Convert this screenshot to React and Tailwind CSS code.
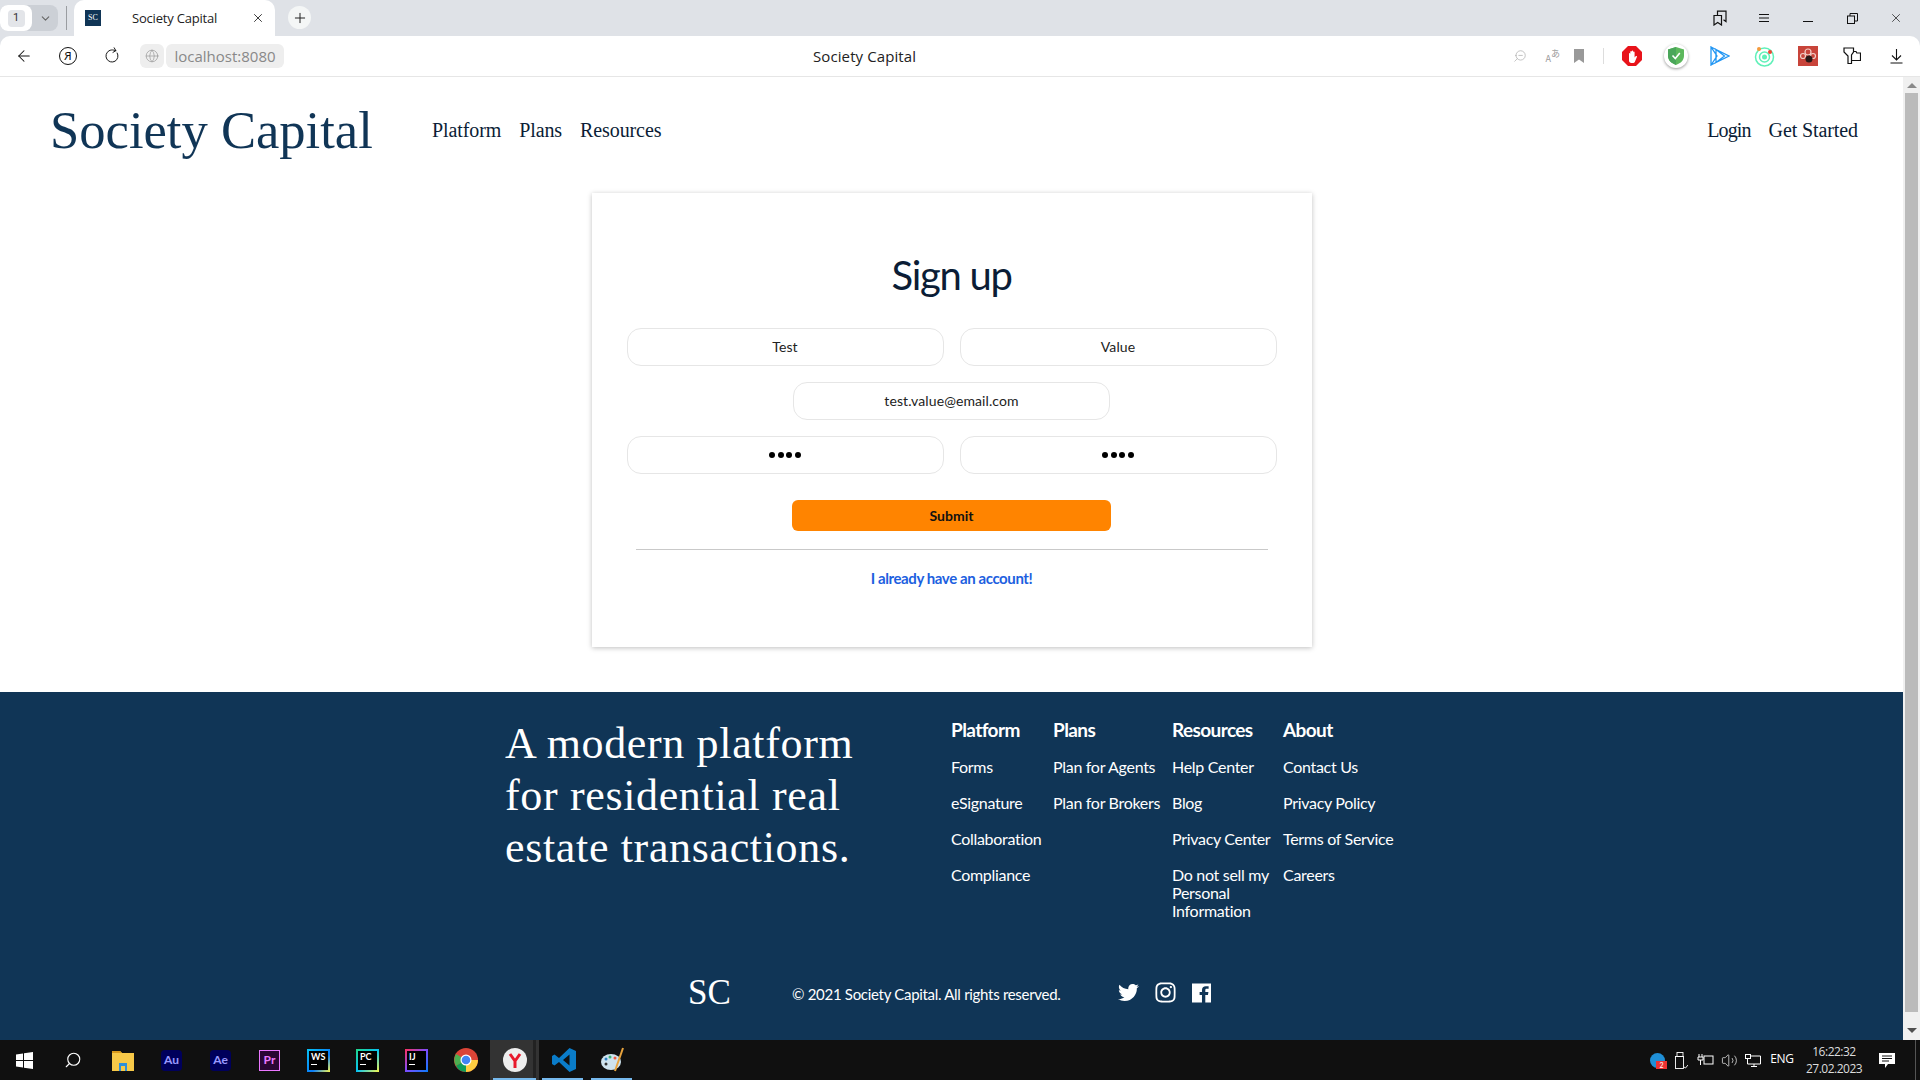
import React from 'react';
import { ArrowLeft, RotateCw, Globe, X, Plus, ChevronDown, ZoomOut, Search, Volume2 } from 'lucide-react';
import { FaTwitter, FaInstagram } from 'react-icons/fa';

const serif = "font-['Liberation_Serif',serif]";
const lato = "font-['Lato',sans-serif]";

function Field({ value, dots }) {
  return (
    <div className={`w-[317px] h-[38px] rounded-[14px] border border-[#e6e6e6] bg-white flex items-center justify-center text-[14px] text-[#222] ${dots ? '' : 'pb-[2px] tracking-[0.1px]'}`}>
      {dots ? (
        <span className="flex gap-[2.5px]">
          {[0, 1, 2, 3].map((i) => <span key={i} className="w-[6px] h-[6px] rounded-full bg-black" />)}
        </span>
      ) : value}
    </div>
  );
}

function FootCol({ title, items, w }) {
  return (
    <div className={`${w} shrink-0`}>
      <div className="text-[19px] font-bold text-white leading-[22px] tracking-[-0.6px] mb-[17px]">{title}</div>
      <div className="flex flex-col gap-[18px]">
        {items.map((t) => <div key={t} className="text-[16px] leading-[18px] text-white tracking-[-0.3px]">{t}</div>)}
      </div>
    </div>
  );
}

function TaskIcon({ children, active, open }) {
  return (
    <div className={`w-[49px] h-[40px] flex items-center justify-center relative ${active ? 'bg-[#333]' : ''}`}>
      {children}
      {active && <span className="absolute top-0 bottom-0 right-[3px] w-[3px] bg-[#222]" />}
      {open && <span className={`absolute bottom-0 left-[3px] h-[2px] bg-[#76b9ed] ${active ? 'right-[3px]' : 'right-[5px]'}`} />}
    </div>
  );
}

function AppTile({ label, bg, color, border, cls = '' }) {
  return (
    <div className={`w-[21px] h-[21px] flex items-center justify-center text-[12px] font-bold ${lato} ${cls}`} style={{ background: bg, color, border: border ? `1px solid ${border}` : undefined }}>{label}</div>
  );
}

function Jet({ label, colors }) {
  return (
    <div className="w-[23px] h-[23px] flex items-start justify-center" style={{ background: colors, padding: 2 }}>
      <div className={`w-full h-full bg-black text-white text-[9px] font-bold leading-[11px] pl-[2px] ${lato}`}>
        {label}
        <div className="w-[6px] h-[1px] bg-white mt-[2px]" />
      </div>
    </div>
  );
}

export default function App() {
  return (
    <div className={`w-[1920px] h-[1080px] overflow-hidden flex flex-col bg-white ${lato}`}>
      {/* tab strip */}
      <div className="h-[36px] bg-[#dfe2e7] flex items-end shrink-0">
        <div className="h-[26px] w-[58px] mb-[5px] rounded-[8px] bg-[#ccd0d6] flex items-center">
          <div className="w-[32px] h-[26px] rounded-[8px] bg-white flex items-center justify-center">
            <span className="w-[17px] h-[17px] rounded-[4px] bg-[#e3e5e9] text-[11px] text-[#333] flex items-center justify-center font-['Roboto',sans-serif]">1</span>
          </div>
          <ChevronDown size={13} className="ml-[7px] text-[#666]" />
        </div>
        <div className="w-px h-[24px] bg-[#9a9da1] ml-[8px] mb-[6px]" />
        <div className="w-[201px] h-[36px] ml-[7px] bg-white rounded-t-[10px] flex items-center pl-[11px] pr-[10px]">
          <div className={`w-[16px] h-[16px] bg-[#103556] text-white text-[8px] leading-[16px] text-center ${serif}`}>SC</div>
          <span className="ml-[31px] mt-[1px] text-[13px] text-[#222] font-['Open_Sans',sans-serif] tracking-[-0.2px]">Society Capital</span>
          <X size={14} strokeWidth={1.5} className="ml-auto text-[#222]" />
        </div>
        <div className="w-[23px] h-[23px] rounded-full bg-[#f4f6f6] ml-[13px] mb-[7px] flex items-center justify-center">
          <Plus size={16} strokeWidth={1.5} className="text-[#222]" />
        </div>
        <div className="ml-auto flex h-[36px] items-center pr-[2px]">
          <div className="w-[44px] flex justify-center">
            <svg width="14" height="16" viewBox="0 0 14 16" fill="none" stroke="#111" strokeWidth="1.2">
              <path d="M1 5.500h7.500v9.500L4.700 12.500 1 15z" /><path d="M4.500 5V1.200H13V11.500l-2.500-1.800" />
            </svg>
          </div>
          <div className="w-[44px] flex justify-center">
            <svg width="12" height="10" viewBox="0 0 12 10" stroke="#111" strokeWidth="1"><path d="M1 1.500h10M1 5h10M1 8.500h10" /></svg>
          </div>
          <div className="w-[44px] flex justify-center"><div className="w-[10px] h-px bg-[#111] mt-[7px]" /></div>
          <div className="w-[44px] flex justify-center">
            <svg width="11" height="11" viewBox="0 0 11 11" fill="none" stroke="#111" strokeWidth="1"><rect x="0.500" y="3" width="7" height="7.500" /><path d="M3 3V.5h7.500V8H8" /></svg>
          </div>
          <div className="w-[44px] flex justify-center"><X size={14} strokeWidth={1.2} className="text-[#111]" /></div>
        </div>
      </div>

      {/* toolbar */}
      <div className="h-[41px] bg-[#dfe2e7] shrink-0">
        <div className="h-full bg-white rounded-t-[10px] border-b border-[#e6e6e6] flex items-center">
          <div className="w-[48px] flex justify-center"><ArrowLeft size={18} strokeWidth={1.4} className="text-[#111]" /></div>
          <div className="w-[40px] flex justify-center">
            <div className="w-[18px] h-[18px] rounded-full border border-[#111] text-[11px] leading-[16px] text-center text-[#111]">Я</div>
          </div>
          <div className="w-[48px] flex justify-center"><RotateCw size={16} strokeWidth={1.3} className="text-[#111] rotate-[-30deg]" /></div>
          <div className="w-[24px] h-[24px] ml-[4px] rounded-[6px] bg-[#eeeeee] flex items-center justify-center"><Globe size={14} strokeWidth={1.2} className="text-[#999]" /></div>
          <div className="h-[24px] ml-[2px] w-[118px] rounded-[6px] bg-[#eeeeee] text-[15px] leading-[24px] text-[#888] text-center font-['Open_Sans',sans-serif]">localhost:8080</div>
          <div className="ml-[529px] text-[15px] tracking-[0.1px] text-[#222] font-['Open_Sans',sans-serif]">Society Capital</div>
          <div className="ml-auto flex items-center pr-[2px]">
            <ZoomOut size={14} strokeWidth={1.2} className="text-[#aaa] -scale-x-100 mr-[19px]" />
            <span className="flex items-start h-[14px] text-[#999] mr-[14px] font-['Noto_Sans_CJK_JP',sans-serif]">
              <span className="text-[9px] leading-none mt-[5px]">A</span>
              <span className="text-[9px] leading-none">あ</span>
            </span>
            <svg className="mr-[19px]" width="10" height="14" viewBox="0 0 10 14" fill="#999"><path d="M0 0h10v14L5 10.500 0 14z" /></svg>
            <div className="w-px h-[16px] bg-[#ddd] mr-[6px]" />
            <div className="w-[44px] flex justify-center">
              <div className="w-[20px] h-[20px] bg-[#e8131a] flex items-center justify-center [clip-path:polygon(30%_0,70%_0,100%_30%,100%_70%,70%_100%,30%_100%,0_70%,0_30%)]">
                <svg width="11" height="13" viewBox="0 0 11 13" fill="#fff"><path d="M2 4c0-1.500 1.300-1.500 1.300 0V2c0-1.300 1.400-1.300 1.400 0V1.400c0-1.300 1.500-1.300 1.500 0V2.500c0-1.200 1.400-1.200 1.400 0v5l1-1.200c1-.9 1.800 0 1.200.9L7.800 12c-.5.700-1 1-2 1H4.500C2.800 13 2 12 2 10.500z" /></svg>
              </div>
            </div>
            <div className="w-[44px] flex justify-center">
              <div className="w-[24px] h-[24px] rounded-full bg-white shadow-[0_1px_3px_rgba(0,0,0,0.4)] flex items-center justify-center">
                <svg width="16" height="18" viewBox="0 0 16 18"><path d="M8 0l8 2.500V9c0 4.500-4 7.500-8 9-4-1.500-8-4.500-8-9V2.500z" fill="#5cb85c" /><path d="M8 0v18c-4-1.500-8-4.500-8-9V2.500z" fill="#4aa65a" /><path d="M4.500 8.500L7.300 11.500l4.500-5.500" stroke="#fff" strokeWidth="1.600" fill="none" /></svg>
              </div>
            </div>
            <div className="w-[44px] flex justify-center">
              <svg width="20" height="20" viewBox="0 0 20 20" fill="none" stroke="#2196f3" strokeWidth="1.300"><path d="M1 1v18l6-9zM1 1l18 9-18 9M6 3.500v13l8.500-6.500z" /></svg>
            </div>
            <div className="w-[44px] flex justify-center">
              <svg width="21" height="21" viewBox="0 0 21 21" fill="none"><circle cx="10.500" cy="11" r="9" stroke="#5ff0b8" strokeWidth="1.500" /><circle cx="10.500" cy="11" r="5" stroke="#5ff0b8" strokeWidth="1.500" /><circle cx="10.500" cy="11" r="2.500" fill="#5ff0b8" /><circle cx="5" cy="3" r="2" fill="#f59a3c" /><circle cx="16" cy="6" r="2" fill="#ee4433" /></svg>
            </div>
            <div className="w-[44px] flex justify-center">
              <svg width="20" height="20" viewBox="0 0 20 20"><rect width="20" height="20" fill="#c8443a" /><circle cx="10" cy="6" r="3" fill="none" stroke="#f3d0c8" strokeWidth="1.200" /><circle cx="5" cy="10" r="2.500" fill="none" stroke="#f3d0c8" strokeWidth="1.200" /><circle cx="15" cy="10" r="2.500" fill="none" stroke="#f3d0c8" strokeWidth="1.200" /><circle cx="11" cy="13" r="3.500" fill="#2a1a18" /></svg>
            </div>
            <div className="w-[44px] flex justify-center">
              <svg width="18" height="18" viewBox="0 0 18 18" fill="none" stroke="#111" strokeWidth="1.200"><path d="M1 1h9.500v4L8.500 8v8.500H5V9L1 5zM10.500 4.500H13l.8 1.500H17.500v7.500H8.500" /></svg>
            </div>
            <div className="w-[44px] flex justify-center">
              <svg width="13" height="15" viewBox="0 0 13 15" fill="none" stroke="#111" strokeWidth="1.100"><path d="M6.500 0v10.500M2 6.500l4.500 4.500L11 6.500M0.500 14h12" /></svg>
            </div>
          </div>
        </div>
      </div>

      {/* page + scrollbar */}
      <div className="flex-1 min-h-0 flex">
        <div className="flex-1 min-w-0 flex flex-col">
          <header className="h-[116px] shrink-0 flex items-center pl-[50px] pr-[45px] pb-[10px] text-[#0b1d36]">
            <div className={`${serif} text-[52.6px] leading-none text-[#103556] w-[382px] shrink-0`}>Society Capital</div>
            <nav className={`${serif} text-[20px] flex gap-[18px] tracking-[-0.1px]`}>
              <span>Platform</span><span>Plans</span><span>Resources</span>
            </nav>
            <div className={`${serif} text-[20px] flex gap-[18px] ml-auto`}>
              <span className="tracking-[-0.9px]">Login</span><span className="tracking-[-0.1px]">Get Started</span>
            </div>
          </header>

          <main className="flex-1 min-h-0 flex justify-center">
            <section className="w-[720px] h-[454px] bg-white shadow-[0_1px_5px_rgba(0,0,0,0.25)] flex flex-col items-center">
              <h1 className="text-[40px] leading-[48px] text-[#0b1d36] tracking-[-1.3px] mt-[58px] mb-[29px]">Sign up</h1>
              <div className="flex flex-col gap-[16px] items-center">
                <div className="flex gap-[16px]"><Field value="Test" /><Field value="Value" /></div>
                <Field value="test.value@email.com" />
                <div className="flex gap-[16px]"><Field dots /><Field dots /></div>
              </div>
              <div className="w-[319px] h-[31px] mt-[26px] rounded-[6px] bg-[#ff8400] text-[14px] font-bold text-[#111] flex items-center justify-center">Submit</div>
              <div className="w-[632px] h-px bg-[#c9c9c9] mt-[18px]" />
              <div className="mt-[19px] text-[15px] font-bold leading-[18px] text-[#1d5fe0] tracking-[-0.4px]">I already have an account!</div>
            </section>
          </main>

          <footer className="h-[348px] shrink-0 bg-[#103556] text-white flex flex-col items-center">
            <div className="flex w-[894px] pt-[27px] h-[283px] ml-[1px]">
              <div className={`${serif} text-[44px] leading-[52px] tracking-[0.65px] w-[446px] shrink-0 mt-[-1px]`}>A modern platform<br />for residential real<br />estate transactions.</div>
              <FootCol w="w-[102px]" title="Platform" items={['Forms', 'eSignature', 'Collaboration', 'Compliance']} />
              <FootCol w="w-[119px]" title="Plans" items={['Plan for Agents', 'Plan for Brokers']} />
              <FootCol w="w-[111px]" title="Resources" items={['Help Center', 'Blog', 'Privacy Center', 'Do not sell my Personal Information']} />
              <FootCol w="w-[116px]" title="About" items={['Contact Us', 'Privacy Policy', 'Terms of Service', 'Careers']} />
            </div>
            <div className="flex items-center ml-[-4px]">
              <div className={`${serif} text-[35px] leading-none w-[104px]`}>SC</div>
              <div className="text-[15px] mt-[4px] w-[326px] tracking-[-0.3px]">© 2021 Society Capital. All rights reserved.</div>
              <div className="flex items-center gap-[15px]">
                <FaTwitter size={21} />
                <FaInstagram size={23} />
                <svg width="19" height="20" viewBox="0 0 20 20" fill="#fff"><path d="M0 0h20v20h-6v-8h2.800l.5-3H14V7c0-1 .5-1.500 1.500-1.500h2V3h-3c-2.500 0-4 1.500-4 4v2H8v3h2.500v8H0z" /></svg>
              </div>
            </div>
          </footer>
        </div>

        {/* scrollbar */}
        <div className="w-[17px] shrink-0 bg-[#f0f0f0] flex flex-col">
          <div className="h-[16px] flex items-center justify-center"><div className="w-0 h-0 border-x-[5px] border-x-transparent border-b-[5px] border-b-[#8a8a8a]" /></div>
          <div className="flex-1 mx-[2px] bg-[#bbbbbb]" />
          <div className="h-[28px] pt-[8px] flex items-center justify-center"><div className="w-0 h-0 border-x-[5px] border-x-transparent border-t-[5px] border-t-[#505050]" /></div>
        </div>
      </div>

      {/* taskbar */}
      <div className="h-[40px] bg-[#101010] shrink-0 flex items-center text-white">
        <TaskIcon>
          <svg width="17" height="17" viewBox="0 0 17 17" fill="#fff"><path d="M0 2.500l7-1v6.500H0zM8 1.300L17 0v8H8zM0 9h7v6.500l-7-1zM8 9h9v8l-9-1.300z" /></svg>
        </TaskIcon>
        <TaskIcon><Search size={18} strokeWidth={1.5} className="-scale-x-100 mr-[2px]" /></TaskIcon>
        <TaskIcon>
          <svg width="22" height="21" viewBox="0 0 22 21"><path d="M0 1h8l2 2h12v18H0z" fill="#f7c948" /><path d="M0 1h8l2 2H0z" fill="#d99a1c" /><rect x="7" y="13" width="8" height="8" fill="#2f8fd8" /><rect x="9" y="16" width="4" height="5" fill="#f7c948" /></svg>
        </TaskIcon>
        <TaskIcon><AppTile label="Au" bg="#00005b" color="#9999ff" cls="rounded-[4px]" /></TaskIcon>
        <TaskIcon><AppTile label="Ae" bg="#00005b" color="#9999ff" cls="rounded-[4px]" /></TaskIcon>
        <TaskIcon><AppTile label="Pr" bg="#2a0634" color="#ea77ff" border="#ea77ff" /></TaskIcon>
        <TaskIcon><Jet label="WS" colors="linear-gradient(135deg,#07c3f2,#087cfa 60%,#fcf84a)" /></TaskIcon>
        <TaskIcon><Jet label="PC" colors="linear-gradient(135deg,#21d789,#07c3f2 50%,#fcf84a)" /></TaskIcon>
        <TaskIcon><Jet label="IJ" colors="linear-gradient(135deg,#fe315d,#7b4dff 50%,#087cfa)" /></TaskIcon>
        <TaskIcon>
          <svg width="24" height="24" viewBox="0 0 24 24"><circle cx="12" cy="12" r="12" fill="#db4437" /><path d="M12 12L2 18a12 12 0 0 1 0-12z" fill="#4caf50" /><path d="M12 12l-10 6a12 12 0 0 0 10 6z" fill="#0f9d58" /><path d="M12 12h12a12 12 0 0 1-12 12z" fill="#ffcd40" /><circle cx="12" cy="12" r="5.500" fill="#fff" /><circle cx="12" cy="12" r="4.300" fill="#4285f4" /></svg>
        </TaskIcon>
        <TaskIcon active open>
          <svg width="24" height="24" viewBox="0 0 24 24"><circle cx="12" cy="12" r="12" fill="#eee" /><path d="M7 6l5 7 5-7M12 13v7" stroke="#e8192c" strokeWidth="3" fill="none" /></svg>
        </TaskIcon>
        <TaskIcon open>
          <svg width="24" height="24" viewBox="0 0 24 24"><path d="M17.500 0L24 3v18l-6.500 3L7 14l-4.500 3.500L0 16V8l2.500-1.500L7 10zM17.500 6.500L11 12l6.500 5.500z" fill="#0a7cc9" /></svg>
        </TaskIcon>
        <TaskIcon open>
          <svg width="24" height="26" viewBox="0 0 24 26"><ellipse cx="10" cy="15" rx="10" ry="8" fill="#cfe3ee" /><circle cx="5" cy="12" r="1.500" fill="#2d7fc1" /><circle cx="9" cy="10" r="1.500" fill="#3bb273" /><circle cx="14" cy="11" r="1.500" fill="#ef5b3f" /><circle cx="5" cy="17" r="1.500" fill="#333" /><path d="M22 1L14 24" stroke="#e8a33d" strokeWidth="2" /></svg>
        </TaskIcon>

        <div className="ml-auto flex items-center h-full">
          <div className="w-[25px] flex justify-center">
            <div className="w-[15px] h-[15px] rounded-full bg-[#1f8fd6] relative">
              <span className="absolute bottom-[-1px] right-[-2px] w-[11px] h-[8px] bg-[#ee3333] text-[7px] leading-[8px] text-center text-white">2</span>
            </div>
          </div>
          <div className="w-[23px] flex justify-center">
            <svg width="13" height="17" viewBox="0 0 13 17" fill="none" stroke="#fff" strokeWidth="0.900"><rect x="2" y="0.500" width="6" height="4" /><rect x="0.500" y="4.500" width="8" height="12" /><path d="M9 15l1.500 1L13 13" /></svg>
          </div>
          <div className="w-[24px] flex justify-center">
            <svg width="17" height="12" viewBox="0 0 17 12" fill="none" stroke="#fff" strokeWidth="1"><path d="M2 0v3M5 0v3M1 3h5v3H1zM3.500 6v5" /><rect x="7" y="2" width="9" height="8" /></svg>
          </div>
          <div className="w-[24px] flex justify-center"><Volume2 size={17} strokeWidth={1} /></div>
          <div className="w-[24px] flex justify-center">
            <svg width="16" height="13" viewBox="0 0 16 13" fill="none" stroke="#fff" strokeWidth="1"><rect x="0.500" y="0.500" width="5" height="4" /><path d="M6 2h9.500v8h-13V5M9 10v2M6 12.500h6" /></svg>
          </div>
          <span className="w-[30px] ml-[2px] text-[12px] font-['Open_Sans',sans-serif] text-center mt-[-2px] tracking-[-0.3px]">ENG</span>
          <div className="w-[50px] ml-[12px] flex flex-col items-center text-[12px] leading-[17px] font-['Open_Sans',sans-serif] text-[#ddd] tracking-[-0.5px] whitespace-nowrap">
            <span>16:22:32</span><span>27.02.2023</span>
          </div>
          <div className="w-[56px] flex justify-center">
            <svg width="17" height="17" viewBox="0 0 17 17" fill="#fff"><path d="M0 1h16v11H9l-3 4v-4H0z" /><path d="M3 4h10M3 6.500h10M3 9h7" stroke="#101010" strokeWidth="1" /></svg>
          </div>
          <div className="w-px h-full bg-[#555] mr-[4px]" />
        </div>
      </div>
    </div>
  );
}
